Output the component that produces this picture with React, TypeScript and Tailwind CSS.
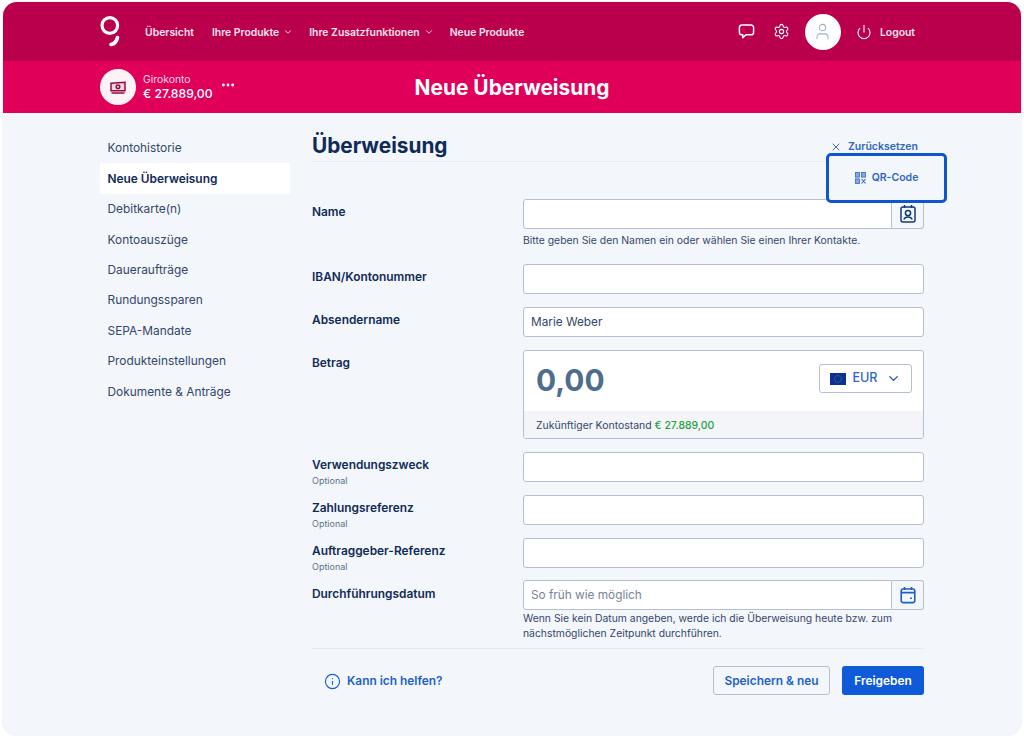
import { ChevronDown, Settings, User, Power, X, Info, Ellipsis } from "lucide-react";

const font = { fontFamily: "Inter, 'Liberation Sans', sans-serif" };

function Logo() {
  return (
    <svg width="22" height="34" viewBox="0 0 22 34" fill="none" stroke="#fff" strokeWidth="3.2">
      <circle cx="9.8" cy="10.5" r="7.8" />
      <path d="M17.5 22.5c-.8 3.6-3 6.4-6.5 7" strokeLinecap="round" strokeWidth="3.6" />
    </svg>
  );
}

function Chat() {
  return (
    <svg width="17" height="17" viewBox="0 0 17 17" fill="none" stroke="#fff" strokeWidth="1.5" strokeLinejoin="round">
      <path d="M4 2h9a2.6 2.6 0 0 1 2.6 2.6v4.6A2.6 2.6 0 0 1 13 11.8H8l-3.2 3v-3H4a2.6 2.6 0 0 1-2.6-2.6V4.6A2.6 2.6 0 0 1 4 2z" />
    </svg>
  );
}

function Cash() {
  return (
    <svg width="16" height="13" viewBox="0 0 16 13" fill="none" stroke="#8f0d46" strokeWidth="1.5">
      <path d="M1 2.2l14-1v8.6H1z" fill="#f7d7e4" />
      <circle cx="8" cy="5.8" r="1.8" />
      <path d="M3.5 4.5v.1M12.5 7v.1" />
      <path d="M1.5 12h13" />
    </svg>
  );
}

function QrIcon() {
  return (
    <svg width="11" height="12" viewBox="0 0 11 12" fill="#2f66c4" stroke="#2f66c4" strokeWidth="0.8">
      <rect x="0.5" y="0.5" width="4" height="4.6" fillOpacity="0.55" />
      <rect x="6.5" y="0.5" width="4" height="4.6" fillOpacity="0.55" />
      <rect x="0.5" y="6.9" width="4" height="4.6" fillOpacity="0.55" />
      <path d="M6.5 7l4 4.5M10.5 7l-4 4.5" fill="none" strokeWidth="1.1" />
    </svg>
  );
}

function Contact() {
  return (
    <svg width="18" height="20" viewBox="0 0 18 20" fill="none" stroke="#0f3a7a" strokeWidth="1.5">
      <rect x="2" y="3" width="14" height="15" rx="2" />
      <path d="M5.5 1v3M12.5 1v3" />
      <circle cx="9" cy="9" r="2.6" />
      <path d="M4.8 15.5c.8-2 2.3-2.6 4.2-2.6s3.4.6 4.2 2.6" />
    </svg>
  );
}

function Calendar() {
  return (
    <svg width="16" height="18" viewBox="0 0 16 18" fill="none" stroke="#1d5fc9" strokeWidth="1.6">
      <rect x="1.2" y="3" width="13.6" height="13.6" rx="2" />
      <path d="M4.5 1v3M11.5 1v3M1.2 6.6h13.6" />
      <path d="M11 11.5v1.4" strokeWidth="1.8" />
    </svg>
  );
}

function Flag() {
  return (
    <svg width="16" height="12" viewBox="0 0 16 12">
      <rect width="16" height="12" fill="#0a3294" />
      <circle cx="8" cy="6" r="3.4" fill="none" stroke="#7d8f4a" strokeWidth="0.8" strokeDasharray="0.9 0.9" />
    </svg>
  );
}

const field = "h-[30px] w-full rounded-[3px] border border-[#b4c0d2] bg-white";

function Label({ text, optional, low }: { text: string; optional?: boolean; low?: boolean }) {
  return (
    <div className="h-[30px] w-[211px] shrink-0">
      <div className={`${low ? "pt-[5px]" : "pt-[4px]"} text-[11.9px] leading-[17px] font-semibold text-[#0f2a56]`}>{text}</div>
      {optional && <div className="mt-[2px] text-[9px] leading-[12px] text-[#5f7188]">Optional</div>}
    </div>
  );
}

const side = ["Kontohistorie", "Neue Überweisung", "Debitkarte(n)", "Kontoauszüge", "Daueraufträge", "Rundungssparen", "SEPA-Mandate", "Produkteinstellungen", "Dokumente & Anträge"];

export default function App() {
  return (
    <div style={font} className="h-[738px] w-[1024px] overflow-hidden bg-white pt-[2px] pr-[3px] pb-[3px] pl-[3px]">
      <div className="flex h-[733px] flex-col overflow-hidden rounded-[14px] bg-[#f3f6fb] shadow-[0_0_2px_rgba(120,140,170,0.35)]">
        <header className="flex h-[59px] shrink-0 items-center bg-[#ba004c] pr-[106px] pl-[97px] text-white">
          <Logo />
          <nav className="ml-[23px] flex items-center pt-[2px] text-[10.4px] font-semibold text-[#fbe3ec]">
            <span>Übersicht</span>
            <span className="ml-[18px] flex items-center gap-[4px]">Ihre Produkte <ChevronDown size={10} strokeWidth={2.2} /></span>
            <span className="ml-[16px] flex items-center gap-[4px]">Ihre Zusatzfunktionen <ChevronDown size={10} strokeWidth={2.2} /></span>
            <span className="ml-[16px]">Neue Produkte</span>
          </nav>
          <div className="ml-auto flex items-center">
            <Chat />
            <Settings size={17} strokeWidth={1.6} className="ml-[18px]" />
            <div className="ml-[15px] flex h-[36px] w-[36px] items-center justify-center rounded-full bg-white">
              <User size={19} strokeWidth={1.3} className="text-[#9fb0c0]" />
            </div>
            <Power size={16} strokeWidth={1.6} className="ml-[15px]" />
            <span className="ml-[8px] pt-[2px] text-[10.4px] font-semibold text-[#fbe3ec]">Logout</span>
          </div>
        </header>
        <div className="relative flex h-[52px] shrink-0 items-center bg-[#e0005a] pl-[97px] text-white">
          <div className="flex h-[36px] w-[36px] items-center justify-center rounded-full bg-[#fdf3f7]">
            <Cash />
          </div>
          <div className="ml-[7px]">
            <div className="pt-[1px] text-[10.4px] leading-[12px] text-[#fbd5e4]">Girokonto</div>
            <div className="text-[12.2px] leading-[15px] font-medium">€ 27.889,00</div>
          </div>
          <Ellipsis size={16} strokeWidth={2.4} className="mb-[4px] ml-[7px]" />
          <h1 className="absolute inset-x-0 mt-[1px] text-center text-[20.9px] font-bold">Neue Überweisung</h1>
        </div>
        <div className="flex flex-1 pl-[97px]">
          <aside className="w-[190px] shrink-0 pt-[20px]">
            {side.map((s, i) => (
              <div key={s} className={`flex h-[30.45px] items-center px-[7.5px] text-[11.9px] ${i === 1 ? "bg-white font-semibold text-[#0f2a56]" : "text-[#33476a]"}`}>
                {s}
              </div>
            ))}
          </aside>
          <main className="relative ml-[22px] w-[612px] pt-[17px]">
            <div className="flex h-[32px] items-start justify-between border-b border-[#e8edf4]">
              <h2 className="pt-[1px] text-[20.8px] leading-[30px] font-bold text-[#0f2a56]">Überweisung</h2>
              <div className="mt-[9px] mr-[6px] flex items-center gap-[6px] text-[10.5px] font-semibold text-[#2f66c4]">
                <X size={12} strokeWidth={1.9} /> Zurücksetzen
              </div>
            </div>
            <div className="absolute top-[40px] left-[514px] flex h-[50px] w-[121px] items-center justify-center gap-[6px] rounded-[5px] border-[3px] border-[#0f56cc] bg-[#f3f6fb] text-[10.5px] font-semibold text-[#2f66c4]">
              <QrIcon /> QR-Code
            </div>

            <div className="mt-[37px] flex">
              <Label text="Name" />
              <div className="flex-1">
                <div className="flex h-[30px]">
                  <div className="h-[30px] flex-1 rounded-l-[3px] border border-[#b4c0d2] bg-white" />
                  <div className="flex h-[30px] w-[32px] items-center justify-center rounded-r-[3px] border border-l-0 border-[#b4c0d2] bg-[#f3f6fb]">
                    <Contact />
                  </div>
                </div>
                <div className="mt-[4px] text-[10.4px] leading-[15px] text-[#33476a]">Bitte geben Sie den Namen ein oder wählen Sie einen Ihrer Kontakte.</div>
              </div>
            </div>

            <div className="mt-[16px] flex">
              <Label text="IBAN/Kontonummer" />
              <div className={field} />
            </div>

            <div className="mt-[13px] flex">
              <Label text="Absendername" />
              <div className={`${field} flex items-center pt-[2px] pl-[7px] text-[11.8px] text-[#33476a]`}>Marie Weber</div>
            </div>

            <div className="mt-[13px] flex">
              <Label text="Betrag" />
              <div className="h-[89px] flex-1 overflow-hidden rounded-[3px] border border-[#b4c0d2] bg-white">
                <div className="flex h-[60px] items-center justify-between pr-[11px] pl-[12px]">
                  <span className="mb-[1px] text-[29.8px] font-bold text-[#4f6d8f]">0,00</span>
                  <div className="mb-[5px] flex h-[29px] w-[93px] items-center justify-center gap-[6px] rounded-[3px] border border-[#b4c0d2] text-[12.6px] font-medium text-[#2f66c4]">
                    <Flag /> EUR <ChevronDown size={15} strokeWidth={2} className="ml-[2px] text-[#1d4f9e]" />
                  </div>
                </div>
                <div className="flex h-[27px] items-center bg-[#f3f5f9] pt-[2px] pl-[12px] text-[10.45px] text-[#33476a]">
                  Zukünftiger Kontostand <span className="ml-[3px] font-medium text-[#23a23c]">€ 27.889,00</span>
                </div>
              </div>
            </div>

            <div className="mt-[13px] flex">
              <Label text="Verwendungszweck" optional />
              <div className={field} />
            </div>
            <div className="mt-[13px] flex">
              <Label text="Zahlungsreferenz" optional />
              <div className={field} />
            </div>
            <div className="mt-[13px] flex">
              <Label text="Auftraggeber-Referenz" optional />
              <div className={field} />
            </div>

            <div className="mt-[12px] flex">
              <Label text="Durchführungsdatum" low />
              <div className="flex-1">
                <div className="flex h-[30px]">
                  <div className="flex h-[30px] flex-1 items-center rounded-l-[3px] border border-[#b4c0d2] bg-white pt-[2px] pl-[7px] text-[11.8px] text-[#74849a]">So früh wie möglich</div>
                  <div className="flex h-[30px] w-[32px] items-center justify-center rounded-r-[3px] border border-l-0 border-[#b4c0d2] bg-[#f3f6fb]">
                    <Calendar />
                  </div>
                </div>
                <div className="mt-[1px] text-[10.36px] leading-[15px] text-[#33476a]">
                  Wenn Sie kein Datum angeben, werde ich die Überweisung heute bzw. zum nächstmöglichen Zeitpunkt durchführen.
                </div>
              </div>
            </div>

            <div className="mt-[7px] flex h-[47px] items-end justify-between border-t border-[#e5eaf1]">
              <div className="mb-[5px] ml-[12px] flex items-center gap-[6px] text-[11.9px] font-semibold text-[#1d5fc9]">
                <Info size={17} strokeWidth={1.6} /> Kann ich helfen?
              </div>
              <div className="flex gap-[12px]">
                <button className="h-[29px] w-[117px] rounded-[3px] border border-[#b4c0d2] text-[11.9px] font-semibold text-[#1d5fc9]">Speichern &amp; neu</button>
                <button className="h-[29px] w-[82px] rounded-[3px] bg-[#0f5ad8] text-[11.9px] font-semibold text-white">Freigeben</button>
              </div>
            </div>
          </main>
        </div>
      </div>
    </div>
  );
}
